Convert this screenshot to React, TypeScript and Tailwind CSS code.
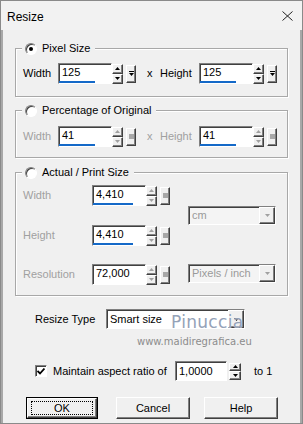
import React from "react";

const raised =
  "bg-[#f0f0f0] border border-t-white border-l-white border-b-[#404040] border-r-[#404040] shadow-[inset_-1px_-1px_0_#808080]";
const sunken =
  "border border-t-[#808080] border-l-[#808080] border-b-white border-r-white shadow-[inset_1px_1px_0_#404040]";

function Tri({ up, color }: { up?: boolean; color: string }) {
  return (
    <svg width="5" height="3" viewBox="0 0 5 3">
      {up ? <path d="M2.5 0 L5 3 L0 3Z" fill={color} /> : <path d="M0 0 L5 0 L2.5 3Z" fill={color} />}
    </svg>
  );
}

function Spin({ disabled }: { disabled?: boolean }) {
  const c = disabled ? "#a0a0a0" : "#000";
  return (
    <div className="flex flex-col w-[11px] h-[20px]">
      <div className={`flex-1 flex items-center justify-center ${raised}`}>
        <Tri up color={c} />
      </div>
      <div className={`flex-1 flex items-center justify-center ${raised}`}>
        <Tri color={c} />
      </div>
    </div>
  );
}

function Drop({ disabled }: { disabled?: boolean }) {
  return (
    <div className={`w-[10px] h-[18px] flex items-center justify-center ${raised}`}>
      {disabled ? (
        <div className="w-[5px] h-[5px] bg-[#a8a8a8]" />
      ) : (
        <svg width="5" height="6" viewBox="0 0 5 6">
          <rect x="0" y="0" width="5" height="1" fill="#000" />
          <path d="M0 2 L5 2 L2.5 5Z" fill="#000" />
        </svg>
      )}
    </div>
  );
}

function SpinInput({
  value,
  disabled,
  line,
}: {
  value: string;
  disabled?: boolean;
  line: "n" | "w" | "none";
}) {
  return (
    <div className="flex items-center">
      <div className={`w-[54px] h-[21px] bg-white flex flex-col justify-between ${sunken}`}>
        <span className="pl-[3px] pt-[2px] text-[11px] leading-[13px] text-black">{value}</span>
        {line === "n" && <div className="h-[2px] w-[36px] bg-[#1469c8]" />}
        {line === "w" && <div className="h-[2px] w-[40px] bg-[#1469c8]" />}
        {line === "none" && <div className="h-[2px] w-[1px] bg-[#404040]" />}
      </div>
      <Spin disabled={disabled} />
      <div className="ml-[3px]">
        <Drop disabled={disabled} />
      </div>
    </div>
  );
}

function Radio({ checked }: { checked?: boolean }) {
  return (
    <div className="w-[12px] h-[12px] rounded-full bg-white border border-t-[#808080] border-l-[#808080] border-b-white border-r-white shadow-[inset_1px_1px_0_#404040] flex items-center justify-center">
      {checked && <div className="w-[4px] h-[4px] rounded-full bg-black" />}
    </div>
  );
}

function Header({ label, checked }: { label: string; checked?: boolean }) {
  return (
    <div className="-mt-[7px] ml-[6px] h-[13px] w-fit flex items-center bg-[#f0f0f0] pl-[3px] pr-[5px]">
      <Radio checked={checked} />
      <span className="ml-[5px] text-[11px] leading-[13px] text-black">{label}</span>
    </div>
  );
}

const group =
  "ml-[12px] w-[273px] border border-[#a8a8a8] shadow-[inset_1px_1px_0_#ffffff,1px_1px_0_#ffffff]";

function Combo({ text, disabled, w }: { text: string; disabled?: boolean; w: "s" | "l" }) {
  return (
    <div
      className={`${w === "s" ? "w-[88px] h-[19px]" : "w-[139px] h-[20px]"} ${
        disabled ? "bg-[#f4f4f4]" : "bg-white"
      } flex items-center justify-between ${sunken}`}
    >
      <span className={`pl-[3px] text-[11px] leading-[13px] ${disabled ? "text-[#9a9a9a]" : "text-black"}`}>{text}</span>
      <div className={`w-[16px] h-full flex items-center justify-center ${raised}`}>
        <Tri color={disabled ? "#a0a0a0" : "#000"} />
      </div>
    </div>
  );
}

function Btn({ label, def, cls }: { label: string; def?: boolean; cls: string }) {
  if (def) {
    return (
      <div className={`${cls} w-[72px] h-[22px] border border-black`}>
        <div className={`w-full h-full flex items-center justify-center ${raised}`}>
          <div className="w-[62px] h-[14px] border border-dotted border-black flex items-center justify-center text-[11px] leading-[13px]">
            {label}
          </div>
        </div>
      </div>
    );
  }
  return (
    <div className={`${cls} w-[74px] h-[22px] flex items-center justify-center text-[11px] leading-[13px] ${raised}`}>
      {label}
    </div>
  );
}

export default function App() {
  return (
    <div className="w-[303px] h-[424px] flex flex-col bg-[#f0f0f0] border border-[#8a8a8a] font-['Liberation_Sans',Arial,sans-serif] text-black overflow-hidden">
      {/* title bar */}
      <div className="h-[29px] flex items-center justify-between pl-[6px] pr-[9px] bg-[#f2f2f2]">
        <span className="text-[12px] leading-[14px] pt-[2px]">Resize</span>
        <svg width="11" height="10" viewBox="0 0 11 10" className="mt-[1px]">
          <path d="M0.5 0.5 L10.5 9.5 M10.5 0.5 L0.5 9.5" stroke="#222" strokeWidth="1" />
        </svg>
      </div>
      {/* body */}
      <div className="flex-1 flex flex-col border-x-2 border-[#a8a8a8] bg-[#f0f0f0]">
        {/* Group 1 */}
        <div className={`mt-[18px] ${group} pb-[12px]`}>
          <Header label="Pixel Size" checked />
          <div className="mt-[8px] flex items-center pl-[7px] h-[21px]">
            <span className="w-[35px] text-[11px]">Width</span>
            <SpinInput value="125" line="n" />
            <span className="ml-[11px] w-[6px] text-[11px]">x</span>
            <span className="ml-[7px] w-[39px] text-[11px]">Height</span>
            <SpinInput value="125" line="n" />
          </div>
        </div>
        {/* Group 2 */}
        <div className={`mt-[13px] ${group} pb-[10px]`}>
          <Header label="Percentage of Original" />
          <div className="mt-[9px] flex items-center pl-[7px] h-[21px]">
            <span className="w-[35px] text-[11px] text-[#a0a0a0]">Width</span>
            <SpinInput value="41" disabled line="n" />
            <span className="ml-[11px] w-[6px] text-[11px] text-[#a0a0a0]">x</span>
            <span className="ml-[7px] w-[39px] text-[11px] text-[#a0a0a0]">Height</span>
            <SpinInput value="41" disabled line="n" />
          </div>
        </div>
        {/* Group 3 */}
        <div className={`mt-[14px] ${group} pb-[10px]`}>
          <Header label="Actual / Print Size" />
          <div className="mt-[6px] flex pl-[7px]">
            <div className="flex flex-col">
              <div className="flex items-center h-[21px]">
                <span className="w-[69px] text-[11px] text-[#a0a0a0]">Width</span>
                <SpinInput value="4,410" disabled line="w" />
              </div>
              <div className="mt-[19px] flex items-center h-[21px]">
                <span className="w-[69px] text-[11px] text-[#a0a0a0]">Height</span>
                <SpinInput value="4,410" disabled line="w" />
              </div>
              <div className="mt-[18px] flex items-center h-[21px]">
                <span className="w-[69px] text-[11px] text-[#a0a0a0]">Resolution</span>
                <SpinInput value="72,000" disabled line="none" />
              </div>
            </div>
            <div className="ml-[18px] flex flex-col">
              <div className="mt-[21px]">
                <Combo text="cm" disabled w="s" />
              </div>
              <div className="mt-[39px]">
                <Combo text="Pixels / inch" disabled w="s" />
              </div>
            </div>
          </div>
        </div>
        {/* Resize type */}
        <div className="relative mt-[13px] h-[20px] flex items-center">
          <span className="ml-[32px] w-[71px] text-[11px]">Resize Type</span>
          <Combo text="Smart size" w="l" />
          <span className="absolute left-[168px] top-[3px] text-[17px] leading-[20px] text-[#94a2b8] font-['DejaVu_Sans',sans-serif] tracking-[0.3px] [text-shadow:0_0_1px_#fff]">
            Pinuccia
          </span>
        </div>
        <div className="mt-[6px] h-[13px] pl-[134px] text-[10px] leading-[13px] text-[#8c8c8c] font-['DejaVu_Sans',sans-serif]">
          www.maidiregrafica.eu
        </div>
        {/* Aspect ratio */}
        <div className="mt-[13px] h-[20px] flex items-center">
          <div className={`ml-[32px] w-[12px] h-[12px] bg-white flex items-center justify-center ${sunken}`}>
            <svg width="8" height="7" viewBox="0 0 8 7">
              <path d="M0.5 3 L3 5.5 L7.5 0.5" stroke="#000" strokeWidth="1.8" fill="none" />
            </svg>
          </div>
          <span className="ml-[6px] w-[122px] text-[11px]">Maintain aspect ratio of</span>
          <div className={`w-[52px] h-[20px] bg-white flex items-center ${sunken}`}>
            <span className="pl-[3px] text-[11px]">1,0000</span>
          </div>
          <div className="ml-[2px]">
            <div className="flex flex-col w-[12px] h-[17px]">
              <div className={`flex-1 flex items-center justify-center ${raised}`}>
                <Tri up color="#000" />
              </div>
              <div className={`flex-1 flex items-center justify-center ${raised}`}>
                <Tri color="#000" />
              </div>
            </div>
          </div>
          <span className="ml-[13px] text-[11px]">to 1</span>
        </div>
        {/* Buttons */}
        <div className="mt-[16px] flex items-center">
          <Btn label="OK" def cls="ml-[23px]" />
          <Btn label="Cancel" cls="ml-[18px]" />
          <Btn label="Help" cls="ml-[14px]" />
        </div>
      </div>
    </div>
  );
}
